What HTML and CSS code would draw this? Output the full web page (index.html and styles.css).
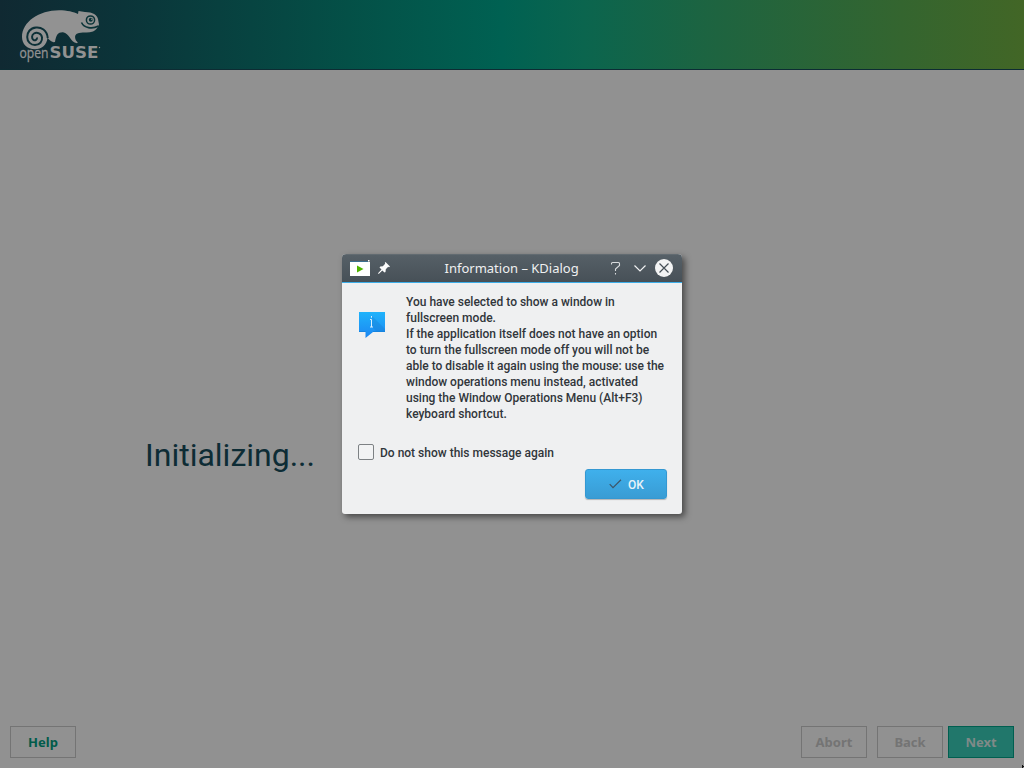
FILE: index.html
```html
<!DOCTYPE html>
<html lang="en">
<head>
<meta charset="utf-8">
<title>Installer</title>
<link rel="stylesheet" href="styles.css">
</head>
<body>
<div class="installer">
  <header class="banner">
    <svg class="logo" viewBox="0 0 90 56" width="90" height="56">
      <path fill="#929292" d="M5 29C5 14 22 2.300 42 2.300C50 2.300 57 4 61 6L61.500 3L68 4C76 4.200 80 7 81 11L82 16.500C81 19 79 22 76 23.500C72 25 67 24 62 25C57.500 26 57.500 29 59 32.500L60.800 34.500L60 35.200C53 34 52.500 25 46 24.200C41 24 39 27 38 34L36.500 34.200C33 33 31.500 31 30.500 29.500C30 37 24.500 41.200 18 41.200C10 41.200 5 36 5 29Z"/>
      <path d="M30.700 30C30 22 24 19 19 19.500C13 20 10.200 24.500 10.200 29C10.200 34 14 37 18 37C23 37 25.500 33 25 29.500C24.600 25.500 20 23.800 17 25.500C14.500 27 14.500 30.500 16.500 32C18.200 33 20.300 31.500 20 29.500" fill="none" stroke="#0d3037" stroke-width="2"/>
      <circle cx="73.500" cy="12" r="4.100" fill="none" stroke="#0b3438" stroke-width="1.500"/>
      <circle cx="73.800" cy="11.800" r="2" fill="#0b3438"/>
      <circle cx="74.800" cy="11.200" r=".7" fill="#929292"/>
      <path d="M64.500 14.500C67 20 75 21.500 81.500 18" fill="none" stroke="#0b3438" stroke-width="1.600"/>
      <text class="logo-open" x="2.500" y="50.200" textLength="29" lengthAdjust="spacingAndGlyphs">open</text>
      <text class="logo-suse" x="32.500" y="50.200" textLength="49" lengthAdjust="spacingAndGlyphs">SUSE</text>
      <circle cx="82.500" cy="39.500" r=".7" fill="#929292"/>
    </svg>
  </header>
  <main class="stage"><h1 class="status">Initializing...</h1></main>
  <footer class="actions">
    <button class="action help">Help</button>
    <button class="action abort" disabled>Abort</button>
    <button class="action back" disabled>Back</button>
    <button class="action next">Next</button>
  </footer>
  <i class="pointer"></i>
</div>
<section class="dialog" role="dialog">
  <div class="titlebar">
    <svg class="app-icon" viewBox="0 0 20 17" width="20" height="17">
      <path fill="#fff" d="M0 2h20v14H0z"/><path fill="#3b6e8f" d="M0 1h18v1H0z"/><path fill="#fff" d="M18 0h1.500v1.500H18z"/><path fill="#4fb300" d="M7 5.500v7l6.500-3.500z"/>
    </svg>
    <svg class="pin" viewBox="0 0 12 12" width="12" height="12">
      <path fill="#fcfcfc" d="M7.500 0L12 4.500L11 5.200L10.200 4.800L7.800 7.300L7.500 10L6.500 10.500L4.300 8.400L.7 12L0 11.300L3.500 7.600L1.500 5.500L2.300 4.500L4.800 4.200L7.200 1.800L6.800 .8Z"/>
    </svg>
    <span class="title">Information – KDialog</span>
    <svg class="controls" viewBox="0 0 68 20" width="68" height="20">
      <path d="M1.500 6.500V5.500Q1.500 4.500 2.500 4.500H8.500Q9.500 4.500 9.500 5.500V7.500L5.500 11V13M5.500 15v1.400" fill="none" stroke="#d9dcde" stroke-width="1.100"/>
      <path d="M24.500 7.500L30 13L35.500 7.500" fill="none" stroke="#eff0f1" stroke-width="1.200"/>
      <circle cx="54" cy="10" r="9" fill="#f3f4f4"/>
      <path d="M49.500 5.500l9 9M58.500 5.500l-9 9" stroke="#465057" stroke-width="1.200"/>
    </svg>
  </div>
  <div class="dialog-body">
    <div class="notice">
      <svg class="info" viewBox="0 0 26 26" width="26" height="26">
        <defs><linearGradient id="bubble" x1="0" y1="0" x2="0" y2="1"><stop stop-color="#1fb3fb"/><stop offset="1" stop-color="#1c86f2"/></linearGradient></defs>
        <path fill="url(#bubble)" d="M0 0H26V20H14L6.500 26V20H0z"/>
        <path fill="#126fc0" opacity=".25" d="M13 4l13 13v3H18L13 15z"/>
        <path fill="#1684df" d="M0 19h6.500v1H0zM14 19h12v1H14z"/>
        <path d="M12.500 4v1.700M11 7.500h1.500V15M11 15h3" stroke="#d9efff" stroke-width="1" fill="none"/>
      </svg>
      <p class="message">You have selected to show a window in<br>fullscreen mode.<br>If the application itself does not have an option<br>to turn the fullscreen mode off you will not be<br>able to disable it again using the mouse: use the<br>window operations menu instead, activated<br>using the Window Operations Menu (Alt+F3)<br>keyboard shortcut.</p>
    </div>
    <div class="again"><span class="checkbox"></span><span class="again-label">Do not show this message again</span></div>
    <button class="ok"><svg viewBox="0 0 13 10" width="13" height="10"><path d="M.7 5.200L4 8.700L12 .8" fill="none" stroke="#3e5668" stroke-width="1.200"/></svg><span>OK</span></button>
  </div>
</section>
</body>
</html>
```

FILE: styles.css
```css
* { box-sizing: border-box; }
body { margin: 0; overflow: hidden; font-family: Roboto, sans-serif; }
.installer { width: 1024px; height: 768px; display: flex; flex-direction: column; background: #919191; position: relative; }
.banner { height: 70px; flex: none; padding: 8px 0 0 17px; border-bottom: 1px solid #0d2c33; background: linear-gradient(90deg, #102932 0%, #0b3439 12%, #045047 34%, #006152 49%, #0b654e 57%, #1e6440 70%, #34652f 88%, #426626 100%); }
.logo { display: block; }
.logo-open, .logo-suse { fill: #929292; font-family: "Open Sans", sans-serif; font-size: 15px; }
.logo-open { stroke: #929292; stroke-width: .3px; }
.logo-suse { font-family: "DejaVu Sans", sans-serif; font-size: 16.5px; font-weight: 700; }
.stage { flex: 1; padding: 366px 0 0 145px; }
.status { margin: 0; font: 400 32px/38px Roboto, sans-serif; color: #0d2c35; }
.actions { height: 42px; padding: 0 10px; display: flex; align-items: flex-start; }
.action { width: 66px; height: 32px; padding: 0; border: 1px solid #747474; background: #919191; font: 700 13px/30px "Noto Sans", sans-serif; color: #747474; }
.help { margin-right: auto; color: #005b4a; }
.back { margin: 0 5px 0 10px; }
.next { color: #7f8a88; background: #21776b; border-color: #005f50; }
.pointer { position: absolute; right: 0; bottom: 0; width: 2px; height: 3px; background: #111; clip-path: polygon(0 0, 50% 0, 50% 33%, 100% 33%, 100% 66%, 50% 66%, 50% 100%, 0 100%); }
.dialog { position: absolute; left: 342px; top: 254px; width: 340px; height: 260px; border-radius: 4px 4px 3px 3px; overflow: hidden; background: #eff0f1; box-shadow: 3px 3px 6px rgba(0, 0, 0, .5); color: #31363b; }
.titlebar { height: 29px; display: flex; align-items: center; padding: 0 0 1px 8px; background: linear-gradient(#566067, #475057); border-top: 1px solid #626b71; border-bottom: 1px solid #3daee9; color: #eff0f1; }
.app-icon { flex: none; }
.pin { flex: none; margin-left: 8px; }
.title { flex: none; width: 135px; margin: 0 30.5px 0 54.5px; font: 400 13px/20px "Noto Sans", sans-serif; white-space: nowrap; }
.controls { flex: none; }
.dialog-body { height: 231px; padding: 11px 15px 0; display: flex; flex-direction: column; }
.notice { display: flex; height: 150px; }
.info { margin: 18px 21px 0 2px; flex: none; }
.message { margin: 0; font: 500 12px/16px Roboto, sans-serif; white-space: nowrap; }
.again { display: flex; align-items: center; gap: 6px; height: 16px; padding-left: 1px; font: 500 12px/16px Roboto, sans-serif; }
.again-label { padding-top: 2px; }
.checkbox { width: 16px; height: 16px; border: 1px solid #7d8184; border-radius: 2px; background: #f2f3f4; }
.ok { width: 82px; height: 30px; margin-top: 9px; padding: 0 0 0 1px; align-self: flex-end; display: flex; align-items: center; justify-content: center; gap: 6px; border: 1px solid #3498d2; border-radius: 3px; background: linear-gradient(#3fb0ec, #399cd4); box-shadow: 0 1px 1px rgba(0, 0, 0, .25); color: #e9f3f8; font: 500 12px/16px Roboto, sans-serif; }
.ok span { padding-top: 2px; }
```
